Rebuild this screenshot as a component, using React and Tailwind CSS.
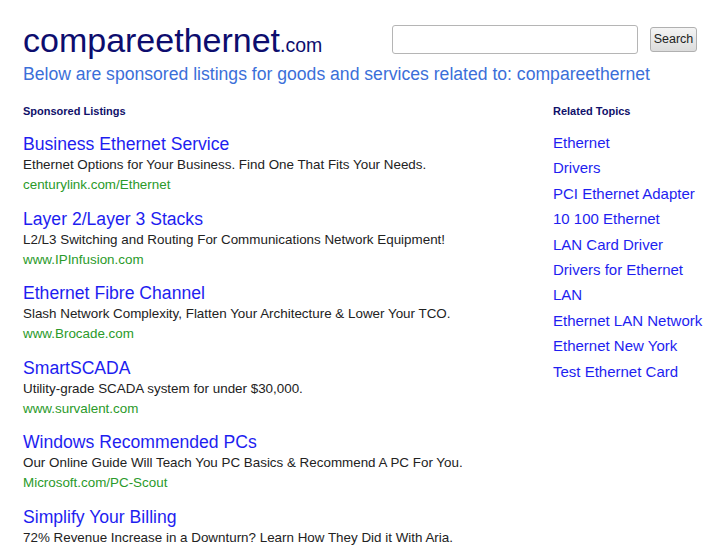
import React from "react";

const ads = [
  ["Business Ethernet Service", "Ethernet Options for Your Business. Find One That Fits Your Needs.", "centurylink.com/Ethernet"],
  ["Layer 2/Layer 3 Stacks", "L2/L3 Switching and Routing For Communications Network Equipment!", "www.IPInfusion.com"],
  ["Ethernet Fibre Channel", "Slash Network Complexity, Flatten Your Architecture & Lower Your TCO.", "www.Brocade.com"],
  ["SmartSCADA", "Utility-grade SCADA system for under $30,000.", "www.survalent.com"],
  ["Windows Recommended PCs", "Our Online Guide Will Teach You PC Basics & Recommend A PC For You.", "Microsoft.com/PC-Scout"],
  ["Simplify Your Billing", "72% Revenue Increase in a Downturn? Learn How They Did it With Aria.", "www.aria.com"],
];

const topics = [
  "Ethernet",
  "Drivers",
  "PCI Ethernet Adapter",
  "10 100 Ethernet",
  "LAN Card Driver",
  "Drivers for Ethernet",
  "LAN",
  "Ethernet LAN Network",
  "Ethernet New York",
  "Test Ethernet Card",
];

export default function App() {
  return (
    <div
      className="h-[545px] overflow-hidden bg-white"
      style={{ fontFamily: '"Liberation Sans", Arial, sans-serif' }}
    >
      <div className="pl-[23px] pr-[24px] pt-[20px]">
        <div className="flex items-start justify-between">
          <div className="pt-[4px] text-[#0d0d6e] leading-[32px] whitespace-nowrap">
            <span className="text-[34px]">compareethernet</span>
            <span className="text-[19.5px]">.com</span>
          </div>
          <div className="flex items-center gap-[12px] pt-[5px] pr-[6px]">
            <input
              type="text"
              className="w-[246px] h-[29px] rounded-[3px] border border-[#b5b5b5] bg-white outline-none"
            />
            <button className="h-[25px] w-[47px] rounded-[3px] border border-[#b0b0b0] bg-gradient-to-b from-[#f4f4f4] to-[#dcdcdc] text-[12.5px] text-[#222] leading-none">
              Search
            </button>
          </div>
        </div>
        <div className="mt-0 text-[17.6px] leading-[22px] text-[#3b6fd9] whitespace-nowrap">
          Below are sponsored listings for goods and services related to: compareethernet
        </div>
        <div className="mt-[19px] flex">
          <div className="w-[530px] shrink-0">
            <div className="text-[11px] font-bold text-[#10106a] leading-[14px]">Sponsored Listings</div>
            <div className="mt-[16px] flex flex-col gap-[14.6px]">
              {ads.map(([t, d, u]) => (
                <div key={t}>
                  <div className="text-[17.6px] leading-[21px] text-[#1e1ef0] whitespace-nowrap">{t}</div>
                  <div className="text-[13.4px] leading-[20px] text-[#222] whitespace-nowrap">{d}</div>
                  <div className="text-[13.4px] leading-[19px] text-[#2a9a2a] whitespace-nowrap">{u}</div>
                </div>
              ))}
            </div>
          </div>
          <div className="shrink-0">
            <div className="text-[11px] font-bold text-[#10106a] leading-[14px] whitespace-nowrap">Related Topics</div>
            <div className="mt-[12px] flex flex-col">
              {topics.map((t) => (
                <div key={t} className="text-[15px] leading-[25.4px] text-[#1e1ef0] whitespace-nowrap">
                  {t}
                </div>
              ))}
            </div>
          </div>
        </div>
      </div>
    </div>
  );
}
